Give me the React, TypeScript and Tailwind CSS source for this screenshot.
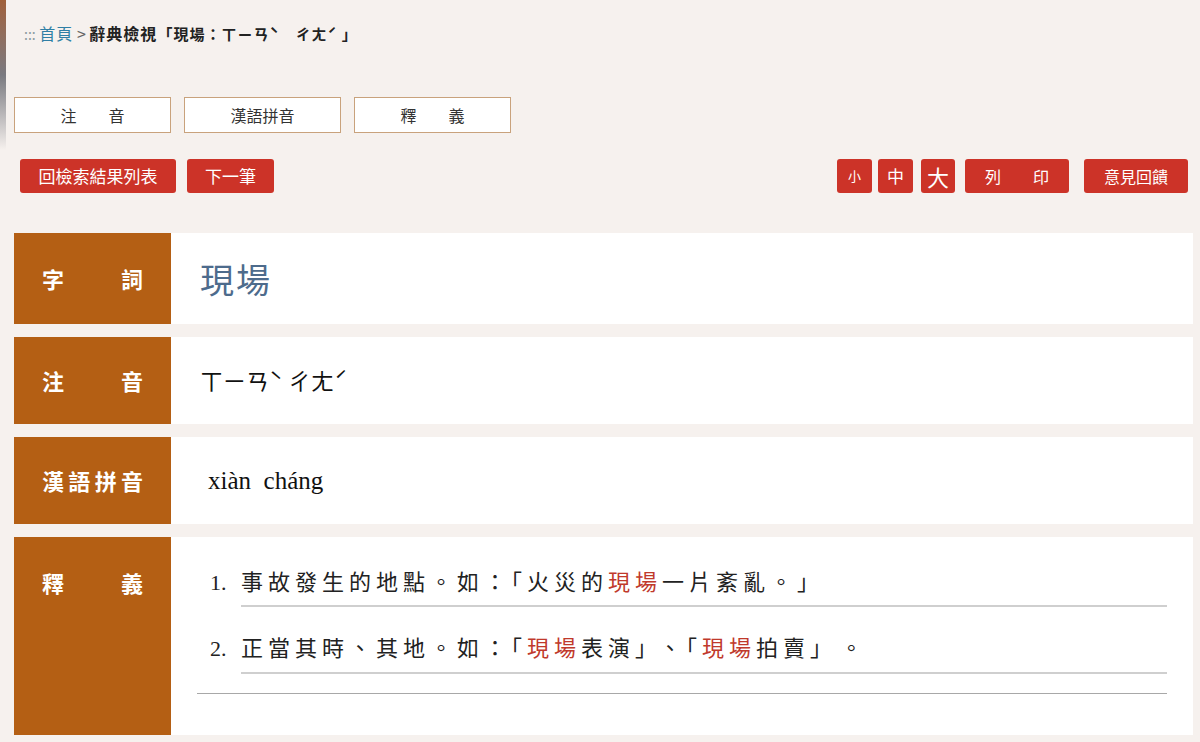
import React from 'react';

const SANS = 'font-["Noto_Sans_CJK_TC","Noto_Sans",sans-serif]';
const SERIF = 'font-["Liberation_Serif","Noto_Sans_CJK_TC",serif]';

const tabs = ['注　　音', '漢語拼音', '釋　　義'];

function Label({ chars, top }: { chars: string[]; top?: boolean }) {
  return (
    <div
      className={`w-[157px] shrink-0 bg-[#b45f14] px-7 flex justify-between text-white text-[22px] font-bold ${
        top ? 'items-start pt-[29px]' : 'items-center'
      }`}
    >
      {chars.map((c, i) => (
        <span key={i}>{c}</span>
      ))}
    </div>
  );
}

const Red = ({ children }: { children: React.ReactNode }) => (
  <span className="text-[#c0392b]">{children}</span>
);

export default function App() {
  return (
    <div className={`min-h-[742px] w-[1200px] bg-[#f6f1ee] flex ${SANS}`}>
      {/* left edge decoration */}
      <div className="w-[6px] h-[150px] shrink-0 bg-gradient-to-b from-[#a0603a] via-[#7a7a80] to-[#f6f1ee]" />

      <div className="flex-1 pl-[8px] pr-[7px]">
        {/* breadcrumb */}
        <div className="pt-[22px] pl-[10px] text-[16px] leading-[22px] text-[#222]">
          <span className="text-[#8a9aa0] text-[14px]">:::</span>{' '}
          <span className="text-[#2f7fa5] tracking-[1px]">首頁</span>
          <span className="text-[#666]"> &gt; </span>
          <span className="font-bold text-[16px] tracking-[1px]">辭典檢視</span>
          <span className="font-bold text-[15px] tracking-[1px]">「現場：ㄒㄧㄢˋ　ㄔㄤˊ 」</span>
        </div>

        {/* tabs */}
        <div className="mt-[52px] flex gap-[13px]">
          {tabs.map((t) => (
            <div
              key={t}
              className="w-[157px] h-[36px] bg-white border border-[#c9a27c] flex items-center justify-center text-[16px] text-[#333]"
            >
              {t}
            </div>
          ))}
        </div>

        {/* action buttons */}
        <div className="mt-[26px] flex items-center justify-between pl-[6px] pr-[5px]">
          <div className="flex gap-[11px]">
            <button className="h-[34px] w-[156px] rounded-[3px] bg-[#cc3328] text-white text-[17px]">
              回檢索結果列表
            </button>
            <button className="h-[34px] w-[87px] rounded-[3px] bg-[#cc3328] text-white text-[17px]">
              下一筆
            </button>
          </div>
          <div className="flex items-center">
            <button className="h-[34px] w-[35px] rounded-[3px] bg-[#cc3328] text-white text-[13px]">小</button>
            <button className="ml-[6px] h-[34px] w-[35px] rounded-[3px] bg-[#cc3328] text-white text-[17px]">中</button>
            <button className="ml-[8px] h-[34px] w-[34px] rounded-[3px] bg-[#cc3328] text-white text-[22px] leading-none">大</button>
            <button className="ml-[10px] h-[34px] w-[104px] rounded-[3px] bg-[#cc3328] text-white text-[16px]">
              列　　印
            </button>
            <button className="ml-[15px] h-[34px] w-[104px] rounded-[3px] bg-[#cc3328] text-white text-[16px]">
              意見回饋
            </button>
          </div>
        </div>

        {/* entry table */}
        <div className="mt-[40px] flex flex-col gap-[13px]">
          <div className="flex h-[91px]">
            <Label chars={['字', '詞']} />
            <div className="flex-1 bg-white flex items-center pl-[29px]">
              <span className="text-[34px] text-[#4d6b8c] tracking-[2px]">現場</span>
            </div>
          </div>

          <div className="flex h-[87px]">
            <Label chars={['注', '音']} />
            <div className="flex-1 bg-white flex items-center pl-[29px]">
              <span className="text-[23px] text-[#111]">ㄒㄧㄢˋ ㄔㄤˊ</span>
            </div>
          </div>

          <div className="flex h-[87px]">
            <Label chars={['漢', '語', '拼', '音']} />
            <div className="flex-1 bg-white flex items-center pl-[37px]">
              <span className={`${SERIF} text-[25px] text-[#111]`}>xiàn&nbsp; cháng</span>
            </div>
          </div>

          <div className="flex h-[198px]">
            <Label chars={['釋', '義']} top />
            <div className="flex-1 bg-white px-[26px] pt-[31px]">
              <ol className={`${SERIF} text-[22px] leading-[30px] text-[#222]`}>
                <li className="flex">
                  <span className="w-[44px] shrink-0 pl-[13px]">1.</span>
                  <div className="flex-1 pb-[7px] border-b-2 border-[#cfcfcf] tracking-[5px]">
                    事故發生的地點。如：「火災的<Red>現場</Red>一片紊亂。」
                  </div>
                </li>
                <li className="flex mt-[27px]">
                  <span className="w-[44px] shrink-0 pl-[13px]">2.</span>
                  <div className="flex-1 pb-[8px] border-b-2 border-[#cfcfcf] tracking-[5px]">
                    正當其時、其地。如：「<Red>現場</Red>表演<span className="mr-[8px]">」</span>、「<Red>現場</Red>拍賣<span className="mr-[14px]">」</span>。
                  </div>
                </li>
              </ol>
              <div className="mt-[19px] border-t border-[#a8a8a8]" />
            </div>
          </div>
        </div>
      </div>
    </div>
  );
}
